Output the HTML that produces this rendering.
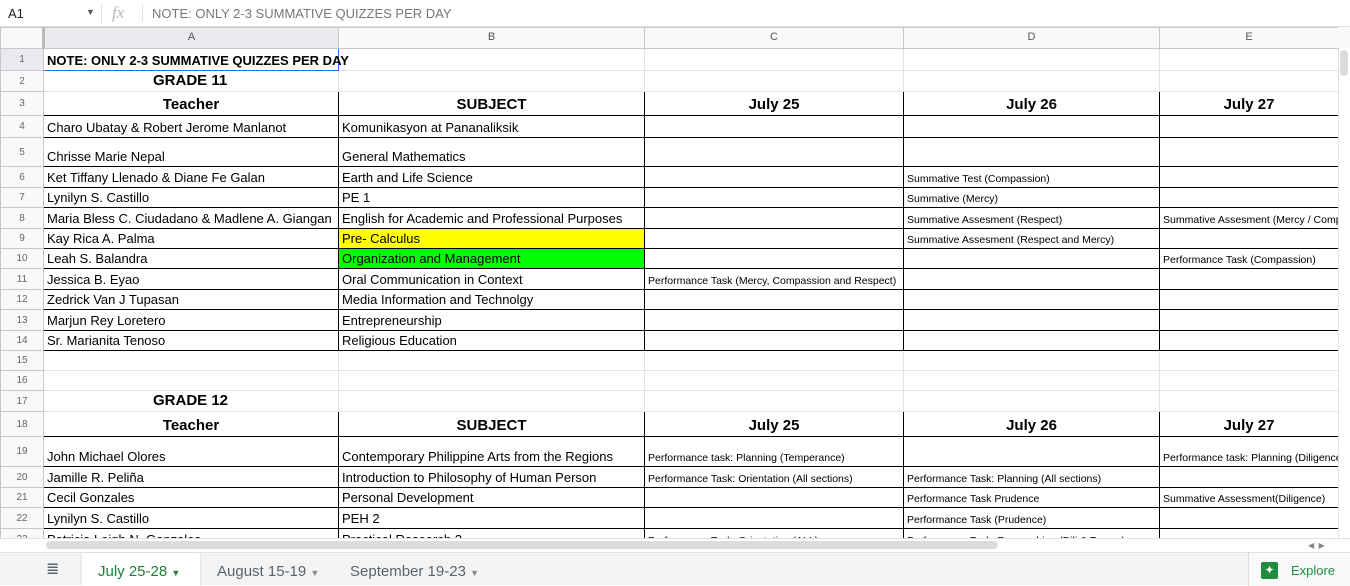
<!DOCTYPE html>
<html><head><meta charset="utf-8"><style>
*{box-sizing:border-box;margin:0;padding:0}
body{width:1350px;height:585px;overflow:hidden;background:#fff;font-family:"Liberation Sans",Arial,sans-serif;position:relative}
.fb{position:absolute;left:0;top:0;width:1350px;height:27px;border-bottom:1px solid #e0e0e0;font-size:13px;color:#222}
.grid{position:absolute;left:0;top:27px;border-collapse:collapse;table-layout:fixed;width:1338px}
.grid td{border:1px solid #e2e3e3;font-size:13px;color:#000;vertical-align:bottom;padding:0 3px 2px 3px;white-space:nowrap;overflow:hidden}
.grid td.rh{background:#f8f9fa;color:#666;font-size:10px;text-align:center;vertical-align:middle;border-color:#c7c7c7;padding:0}
.grid tr.ch td{background:#f8f9fa;color:#555;font-size:11px;text-align:center;vertical-align:middle;border-color:#c7c7c7}
.grid tr.ch td.sel{background:#e8eaed}
.grid td.rh.sel{background:#e8eaed}
.d td:not(.rh){border:1px solid #000}
.h{font-weight:bold;font-size:15px!important;text-align:center}
.s{font-size:10.5px!important}
</style></head><body>
<div class="fb">
<span style="position:absolute;left:8px;top:6px">A1</span>
<span style="position:absolute;left:86px;top:7px;font-size:9px;color:#555">▼</span>
<span style="position:absolute;left:101px;top:3px;width:1px;height:20px;background:#e0e0e0"></span>
<span style="position:absolute;left:112px;top:3px;font-family:'Liberation Serif',serif;font-style:italic;color:#bbb;font-size:17px">fx</span>
<span style="position:absolute;left:142px;top:4px;width:1px;height:18px;background:#e0e0e0"></span>
<span style="position:absolute;left:152px;top:6px;color:#777">NOTE: ONLY 2-3 SUMMATIVE QUIZZES PER DAY</span>
</div>
<table class="grid">
<colgroup><col style="width:43px"><col style="width:295px"><col style="width:306px"><col style="width:259px"><col style="width:256px"><col style="width:179px"></colgroup>
<tr class="ch" style="height:21px"><td style="border-right:3px solid #bbb"></td><td class="sel">A</td><td>B</td><td>C</td><td>D</td><td>E</td></tr>
<tr style="height:22px"><td class="rh sel">1</td><td style="font-weight:bold;font-size:13px;border:1px solid #1a73e8;overflow:visible;padding-left:3px">NOTE: ONLY 2-3 SUMMATIVE QUIZZES PER DAY</td><td></td><td></td><td></td><td></td></tr>
<tr style="height:21px"><td class="rh">2</td><td style="font-weight:bold;font-size:15px;padding-left:109px">GRADE 11</td><td></td><td></td><td></td><td></td></tr>
<tr class="d" style="height:24px"><td class="rh">3</td><td class="h">Teacher</td><td class="h">SUBJECT</td><td class="h">July 25</td><td class="h">July 26</td><td class="h">July 27</td></tr>
<tr class="d" style="height:22px"><td class="rh">4</td><td>Charo Ubatay &amp; Robert Jerome Manlanot</td><td>Komunikasyon at Pananaliksik</td><td></td><td></td><td></td></tr>
<tr class="d" style="height:29px"><td class="rh">5</td><td>Chrisse Marie Nepal</td><td>General Mathematics</td><td></td><td></td><td></td></tr>
<tr class="d" style="height:21px"><td class="rh">6</td><td>Ket Tiffany Llenado &amp; Diane Fe Galan</td><td>Earth and Life Science</td><td></td><td class="s">Summative Test (Compassion)</td><td></td></tr>
<tr class="d" style="height:20px"><td class="rh">7</td><td>Lynilyn S. Castillo</td><td>PE 1</td><td></td><td class="s">Summative (Mercy)</td><td></td></tr>
<tr class="d" style="height:21px"><td class="rh">8</td><td>Maria Bless C. Ciudadano &amp; Madlene A. Giangan</td><td>English for Academic and Professional Purposes</td><td></td><td class="s">Summative Assesment (Respect)</td><td class="s">Summative Assesment (Mercy / Comp</td></tr>
<tr class="d" style="height:20px"><td class="rh">9</td><td>Kay Rica A. Palma</td><td style="background:#ffff00">Pre- Calculus</td><td></td><td class="s">Summative Assesment (Respect and Mercy)</td><td></td></tr>
<tr class="d" style="height:20px"><td class="rh">10</td><td>Leah S. Balandra</td><td style="background:#00ff00">Organization and Management</td><td></td><td></td><td class="s">Performance Task (Compassion)</td></tr>
<tr class="d" style="height:21px"><td class="rh">11</td><td>Jessica B. Eyao</td><td>Oral Communication in Context</td><td class="s">Performance Task (Mercy, Compassion and Respect)</td><td></td><td></td></tr>
<tr class="d" style="height:20px"><td class="rh">12</td><td>Zedrick Van J Tupasan</td><td>Media Information and Technolgy</td><td></td><td></td><td></td></tr>
<tr class="d" style="height:21px"><td class="rh">13</td><td>Marjun Rey Loretero</td><td>Entrepreneurship</td><td></td><td></td><td></td></tr>
<tr class="d" style="height:20px"><td class="rh">14</td><td>Sr. Marianita Tenoso</td><td>Religious Education</td><td></td><td></td><td></td></tr>
<tr style="height:20px"><td class="rh">15</td><td></td><td></td><td></td><td></td><td></td></tr>
<tr style="height:20px"><td class="rh">16</td><td></td><td></td><td></td><td></td><td></td></tr>
<tr style="height:21px"><td class="rh">17</td><td style="font-weight:bold;font-size:15px;padding-left:109px">GRADE 12</td><td></td><td></td><td></td><td></td></tr>
<tr class="d" style="height:25px"><td class="rh">18</td><td class="h">Teacher</td><td class="h">SUBJECT</td><td class="h">July 25</td><td class="h">July 26</td><td class="h">July 27</td></tr>
<tr class="d" style="height:30px"><td class="rh">19</td><td>John Michael Olores</td><td>Contemporary Philippine Arts from the Regions</td><td class="s">Performance task: Planning (Temperance)</td><td></td><td class="s">Performance task: Planning (Diligence</td></tr>
<tr class="d" style="height:21px"><td class="rh">20</td><td>Jamille R. Peliña</td><td>Introduction to Philosophy of Human Person</td><td class="s">Performance Task: Orientation (All sections)</td><td class="s">Performance Task: Planning (All sections)</td><td></td></tr>
<tr class="d" style="height:20px"><td class="rh">21</td><td>Cecil Gonzales</td><td>Personal Development</td><td></td><td class="s">Performance Task Prudence</td><td class="s">Summative Assessment(Diligence)</td></tr>
<tr class="d" style="height:21px"><td class="rh">22</td><td>Lynilyn S. Castillo</td><td>PEH 2</td><td></td><td class="s">Performance Task (Prudence)</td><td></td></tr>
<tr class="d" style="height:21px"><td class="rh">23</td><td>Patricia Leigh N. Gonzales</td><td>Practical Research 2</td><td class="s">Performance Task: Orientation  (ALL)</td><td class="s">Performance Task: Researching  (Dili &amp; Tempe)</td><td></td></tr>
</table>
<div style="position:absolute;left:1338px;top:48px;width:12px;height:492px;background:#fff;border-left:1px solid #e0e0e0"></div>
<div style="position:absolute;left:1340px;top:50px;width:8px;height:26px;background:#dadce0;border-radius:4px"></div>
<div style="position:absolute;left:1338px;top:27px;width:12px;height:21px;background:#f8f9fa"></div>
<div style="position:absolute;left:0;top:538px;width:1350px;height:14px;background:#fff;border-top:1px solid #e0e0e0"></div>
<div style="position:absolute;left:46px;top:541px;width:952px;height:8px;background:#dadce0;border-radius:4px"></div>
<div style="position:absolute;left:1308px;top:541px;font-size:8px;color:#888">◀&nbsp;&nbsp;▶</div>
<div style="position:absolute;left:0;top:552px;width:1350px;height:33px;background:#f1f3f4;border-top:1px solid #e0e0e0;font-size:15px;color:#5f6368">
<span style="position:absolute;left:46px;top:6px;font-size:16px;color:#5f6368">≣</span>
<div style="position:absolute;left:82px;top:0;width:118px;height:33px;background:#fff;color:#188038;padding:10px 0 0 16px;box-shadow:0 1px 2px #ccc">July 25-28 <span style="font-size:9px">▼</span></div>
<div style="position:absolute;left:217px;top:10px">August 15-19 <span style="font-size:9px;color:#888">▼</span></div>
<div style="position:absolute;left:350px;top:10px">September 19-23 <span style="font-size:9px;color:#888">▼</span></div>
<div style="position:absolute;left:1248px;top:0;width:102px;height:33px;border-left:1px solid #ddd;background:#f8f9fa">
<div style="position:absolute;left:12px;top:9px;width:17px;height:17px;background:#1e8e3e;border-radius:2px;color:#fff;font-size:12px;text-align:center;line-height:17px">✦</div>
<span style="position:absolute;left:42px;top:10px;color:#1e8e3e;font-size:13px">Explore</span>
</div>
</div>
</body></html>
